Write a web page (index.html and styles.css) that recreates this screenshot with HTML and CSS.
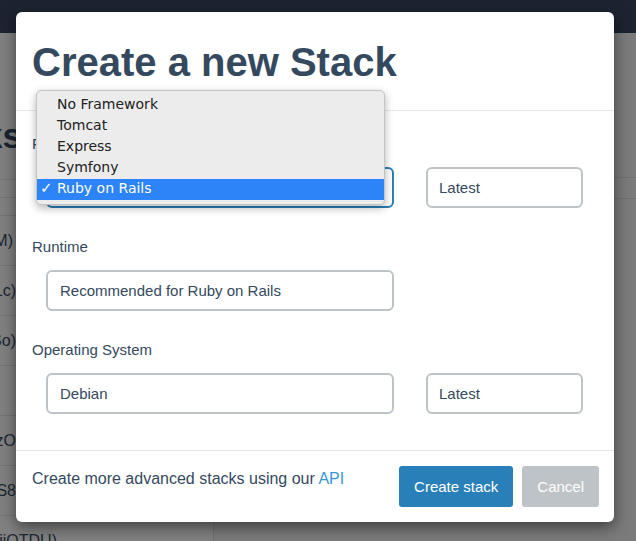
FILE: index.html
```html
<!DOCTYPE html>
<html lang="en">
<head>
<meta charset="utf-8">
<title>Create a new Stack</title>
<link rel="stylesheet" href="styles.css">
</head>
<body>
<div class="page">
  <header class="navbar"></header>
  <div class="page-body">
    <aside class="sidebar">
      <div class="page-title"><span>Stacks</span></div>
      <div class="table-head"></div>
      <div class="table-gap"></div>
      <ul class="rows">
        <li><span class="cell cell-pad">(xkQ4M)</span></li>
        <li><span class="cell">(q2e9Lc)</span></li>
        <li><span class="cell">(b8YwSo)</span></li>
        <li><span class="cell"></span></li>
        <li><span class="cell">(pK4zO</span></li>
        <li><span class="cell">(mR2S8</span></li>
        <li><span class="cell cell-wide">(k9jiQTDU)</span></li>
      </ul>
    </aside>
    <main class="content">
      <div class="content-head"></div>
    </main>
  </div>
</div>

<div class="modal">
  <div class="modal-header">
    <h1 class="modal-title">Create a new Stack</h1>
  </div>
  <div class="modal-body">
    <div class="group">
      <div class="label">Framework</div>
      <div class="fields">
        <div class="field field-wide field-focus">Ruby on Rails</div>
        <div class="field field-narrow">Latest</div>
      </div>
    </div>
    <div class="group">
      <div class="label">Runtime</div>
      <div class="fields">
        <div class="field field-wide">Recommended for Ruby on Rails</div>
      </div>
    </div>
    <div class="group">
      <div class="label">Operating System</div>
      <div class="fields">
        <div class="field field-wide">Debian</div>
        <div class="field field-narrow">Latest</div>
      </div>
    </div>
  </div>
  <div class="modal-footer">
    <p class="footer-text">Create more advanced stacks using our <a class="link" href="#">API</a></p>
    <div class="actions">
      <button class="btn btn-primary" type="button">Create stack</button>
      <button class="btn btn-muted" type="button">Cancel</button>
    </div>
  </div>
</div>

<ul class="select-menu">
  <li class="option"><span class="check"></span><span>No Framework</span></li>
  <li class="option"><span class="check"></span><span>Tomcat</span></li>
  <li class="option"><span class="check"></span><span>Express</span></li>
  <li class="option"><span class="check"></span><span>Symfony</span></li>
  <li class="option option-selected"><span class="check">✓</span><span>Ruby on Rails</span></li>
</ul>
</body>
</html>
```

FILE: styles.css
```css
html, body {
  margin: 0;
  padding: 0;
}

body {
  width: 636px;
  height: 541px;
  overflow: hidden;
  background: #7d7d7d;
  font-family: "Liberation Sans", Arial, sans-serif;
}

.page {
  display: flex;
  flex-direction: column;
  height: 541px;
}

.navbar {
  height: 33px;
  background: #1b2430;
  flex: none;
}

.page-body {
  display: flex;
  flex: 1;
}

.sidebar {
  width: 213px;
  background: #818181;
  border-right: 1px solid #727272;
  flex: none;
}

.page-title {
  margin-top: 83px;
  width: 22px;
  height: 40px;
  display: flex;
  justify-content: flex-end;
  overflow: hidden;
  font-size: 35px;
  line-height: 40px;
  font-weight: 700;
  color: #1a2430;
  white-space: nowrap;
  margin-bottom: 23px;
}

.table-head {
  height: 17px;
  border-top: 1px solid #747474;
  border-bottom: 1px solid #747474;
}

.table-gap {
  height: 17px;
}

.rows {
  list-style: none;
  margin: 0;
  padding: 0;
  border-top: 1px solid #747474;
}

.rows li {
  height: 49px;
  border-bottom: 1px solid #747474;
  display: flex;
  align-items: center;
  font-size: 16px;
  color: #1d2731;
  white-space: nowrap;
}

.cell {
  box-sizing: border-box;
  width: 16px;
  display: flex;
  justify-content: flex-end;
}

.cell-pad {
  padding-right: 3px;
}

.cell-wide {
  width: 57px;
}

.content {
  flex: 1;
  background: #7b7b7b;
}

.content-head {
  margin-top: 144px;
  height: 20px;
  border-top: 1px solid #707070;
  border-bottom: 1px solid #707070;
}

/* Modal */
.modal {
  position: absolute;
  left: 16px;
  top: 12px;
  width: 598px;
  background: #fff;
  border-radius: 6px;
  box-shadow: 0 5px 15px rgba(0, 0, 0, 0.5);
  color: #34495e;
  display: flex;
  flex-direction: column;
}

.modal-header {
  padding: 28px 16px 26px;
  border-bottom: 1px solid #e5e5e5;
}

.modal-title {
  margin: 0;
  font-size: 40px;
  line-height: 44px;
  font-weight: 700;
  white-space: nowrap;
}

.modal-body {
  padding: 23px 0 36px;
  display: flex;
  flex-direction: column;
  gap: 29px;
}

.label {
  padding-left: 16px;
  font-size: 15px;
  line-height: 20px;
}

.fields {
  margin-top: 13px;
  padding-left: 30px;
  display: flex;
  gap: 32px;
}

.field {
  box-sizing: border-box;
  height: 41px;
  border: 2px solid #bdc3c7;
  border-radius: 6px;
  padding: 0 12px;
  display: flex;
  align-items: center;
  font-size: 15px;
  color: #34495e;
  white-space: nowrap;
}

.field-wide {
  width: 348px;
}

.field-narrow {
  width: 157px;
  padding-left: 11px;
}

.field-focus {
  border-color: #2a7fb8;
}

.modal-footer {
  border-top: 1px solid #e5e5e5;
  padding: 16px 15px 15px 16px;
  display: flex;
  justify-content: space-between;
  align-items: flex-start;
}

.footer-text {
  margin: 0;
  font-size: 16px;
  line-height: 24px;
}

.link {
  color: #3498db;
  text-decoration: none;
}

.actions {
  display: flex;
  gap: 9px;
  margin-top: -1px;
}

.btn {
  height: 41px;
  border: none;
  border-radius: 3px;
  padding: 0 15px;
  font-family: "Liberation Sans", Arial, sans-serif;
  font-size: 15px;
  color: #fff;
}

.btn-primary {
  background: #2980b9;
}

.btn-muted {
  background: #bdc3c7;
}

/* Native select popup */
.select-menu {
  position: absolute;
  left: 36px;
  top: 90px;
  width: 349px;
  box-sizing: border-box;
  margin: 0;
  padding: 4px 0;
  list-style: none;
  background: #ececec;
  border: 1px solid #c4c4c4;
  border-radius: 5px;
  box-shadow: 0 3px 8px rgba(0, 0, 0, 0.3);
  font-family: "DejaVu Sans", "Lucida Grande", sans-serif;
  font-size: 14px;
  color: #222;
}

.option {
  box-sizing: border-box;
  height: 21px;
  padding-bottom: 3px;
  display: flex;
  align-items: center;
  white-space: nowrap;
}

.check {
  width: 17px;
  padding-left: 3px;
  font-size: 15px;
  font-weight: 700;
}

.option-selected {
  background: #2d83f8;
  color: #fff;
}
```
